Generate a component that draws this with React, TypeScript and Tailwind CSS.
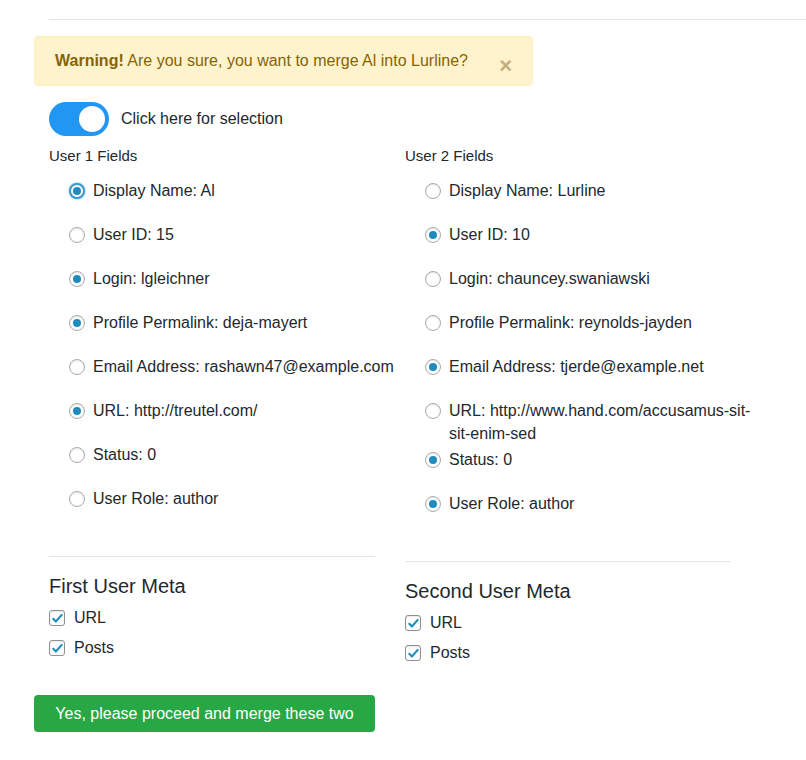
import React from 'react';

interface Field {
  label: string;
  checked: boolean;
  focused?: boolean;
  tight?: boolean;
}

const user1: Field[] = [
  { label: 'Display Name: Al', checked: true, focused: true },
  { label: 'User ID: 15', checked: false },
  { label: 'Login: lgleichner', checked: true },
  { label: 'Profile Permalink: deja-mayert', checked: true },
  { label: 'Email Address: rashawn47@example.com', checked: false },
  { label: 'URL: http://treutel.com/', checked: true },
  { label: 'Status: 0', checked: false },
  { label: 'User Role: author', checked: false },
];

const user2: Field[] = [
  { label: 'Display Name: Lurline', checked: false },
  { label: 'User ID: 10', checked: true },
  { label: 'Login: chauncey.swaniawski', checked: false },
  { label: 'Profile Permalink: reynolds-jayden', checked: false },
  { label: 'Email Address: tjerde@example.net', checked: true },
  { label: 'URL: http://www.hand.com/accusamus-sit-sit-enim-sed', checked: false, tight: true },
  { label: 'Status: 0', checked: true },
  { label: 'User Role: author', checked: true },
];

const Radio: React.FC<{ checked: boolean; focused?: boolean }> = ({ checked, focused }) => (
  <span
    className={
      'mt-[4px] flex h-[16px] w-[16px] shrink-0 items-center justify-center rounded-full bg-white ' +
      (focused
        ? 'border-2 border-[#3d9bd4] shadow-[0_0_2px_rgba(30,140,190,0.8)]'
        : 'border border-[#a7aaad] shadow-[inset_0_1px_2px_rgba(0,0,0,0.1)]')
    }
  >
    {checked && <span className="h-[8px] w-[8px] rounded-full bg-[#1e8cbe]" />}
  </span>
);

const Checkbox: React.FC = () => (
  <span className="flex h-[16px] w-[16px] shrink-0 items-center justify-center rounded-[3px] border border-[#8c8f94] bg-white shadow-[inset_0_1px_2px_rgba(0,0,0,0.1)]">
    <svg width="13" height="13" viewBox="0 0 20 20">
      <path d="M3.5 10.5l4 4.2L16.5 4.5" fill="none" stroke="#1e8cbe" strokeWidth="3.2" strokeLinecap="round" strokeLinejoin="round" />
    </svg>
  </span>
);

const FieldColumn: React.FC<{ title: string; fields: Field[]; meta: string }> = ({ title, fields, meta }) => (
  <div className="px-[15px]">
    <div className="text-[15px] leading-[24px]">{title}</div>
    <div className="mr-[-28px] mt-[11px] pl-[20px]">
      {fields.map((f) => (
        <div key={f.label} className={'flex gap-[8px] leading-[23px] ' + (f.tight ? 'mb-[3px]' : 'mb-[21px]')}>
          <Radio checked={f.checked} focused={f.focused} />
          <span>{f.label}</span>
        </div>
      ))}
    </div>
    <div className="mt-[46px] border-t border-[#e5e5e5]" />
    <div className="mt-[17px] text-[20px] leading-[24px]">{meta}</div>
    <div className="mt-[8px] flex flex-col gap-[6px]">
      {['URL', 'Posts'].map((m) => (
        <div key={m} className="flex h-[24px] items-center gap-[9px]">
          <Checkbox />
          <span>{m}</span>
        </div>
      ))}
    </div>
  </div>
);

export default function App() {
  return (
    <div className="min-h-[760px] bg-white pl-[34px] text-[16px] text-[#23282d] font-['Liberation_Sans',Arial,sans-serif]">
      <div className="ml-[15px] pt-[19px]">
        <div className="border-t border-[#e5e5e5]" />
      </div>

      <div className="relative mt-[16px] flex h-[50px] w-[499px] items-center rounded-[4px] border border-[#ffeeba] bg-[#fff3cd] pl-[20px] text-[#856404]">
        <span>
          <b>Warning!</b> Are you sure, you want to merge Al into Lurline?
        </span>
        <span className="absolute right-[20px] top-[14px] text-[22px] font-bold leading-[30px] text-[#c4ae80]">×</span>
      </div>

      <div className="ml-[15px] mt-[16px] flex items-center gap-[12px]">
        <span className="flex h-[34px] w-[60px] items-center justify-end rounded-full bg-[#2196f3] pr-[4px]">
          <span className="h-[26px] w-[26px] rounded-full bg-white" />
        </span>
        <span>Click here for selection</span>
      </div>

      <div className="mt-[8px] grid w-[712px] grid-cols-[356px_356px] items-start">
        <FieldColumn title="User 1 Fields" fields={user1} meta="First User Meta" />
        <FieldColumn title="User 2 Fields" fields={user2} meta="Second User Meta" />
      </div>

      <button className="mt-[30px] h-[37px] w-[341px] rounded-[4px] bg-[#28a745] text-white">
        Yes, please proceed and merge these two
      </button>
    </div>
  );
}
